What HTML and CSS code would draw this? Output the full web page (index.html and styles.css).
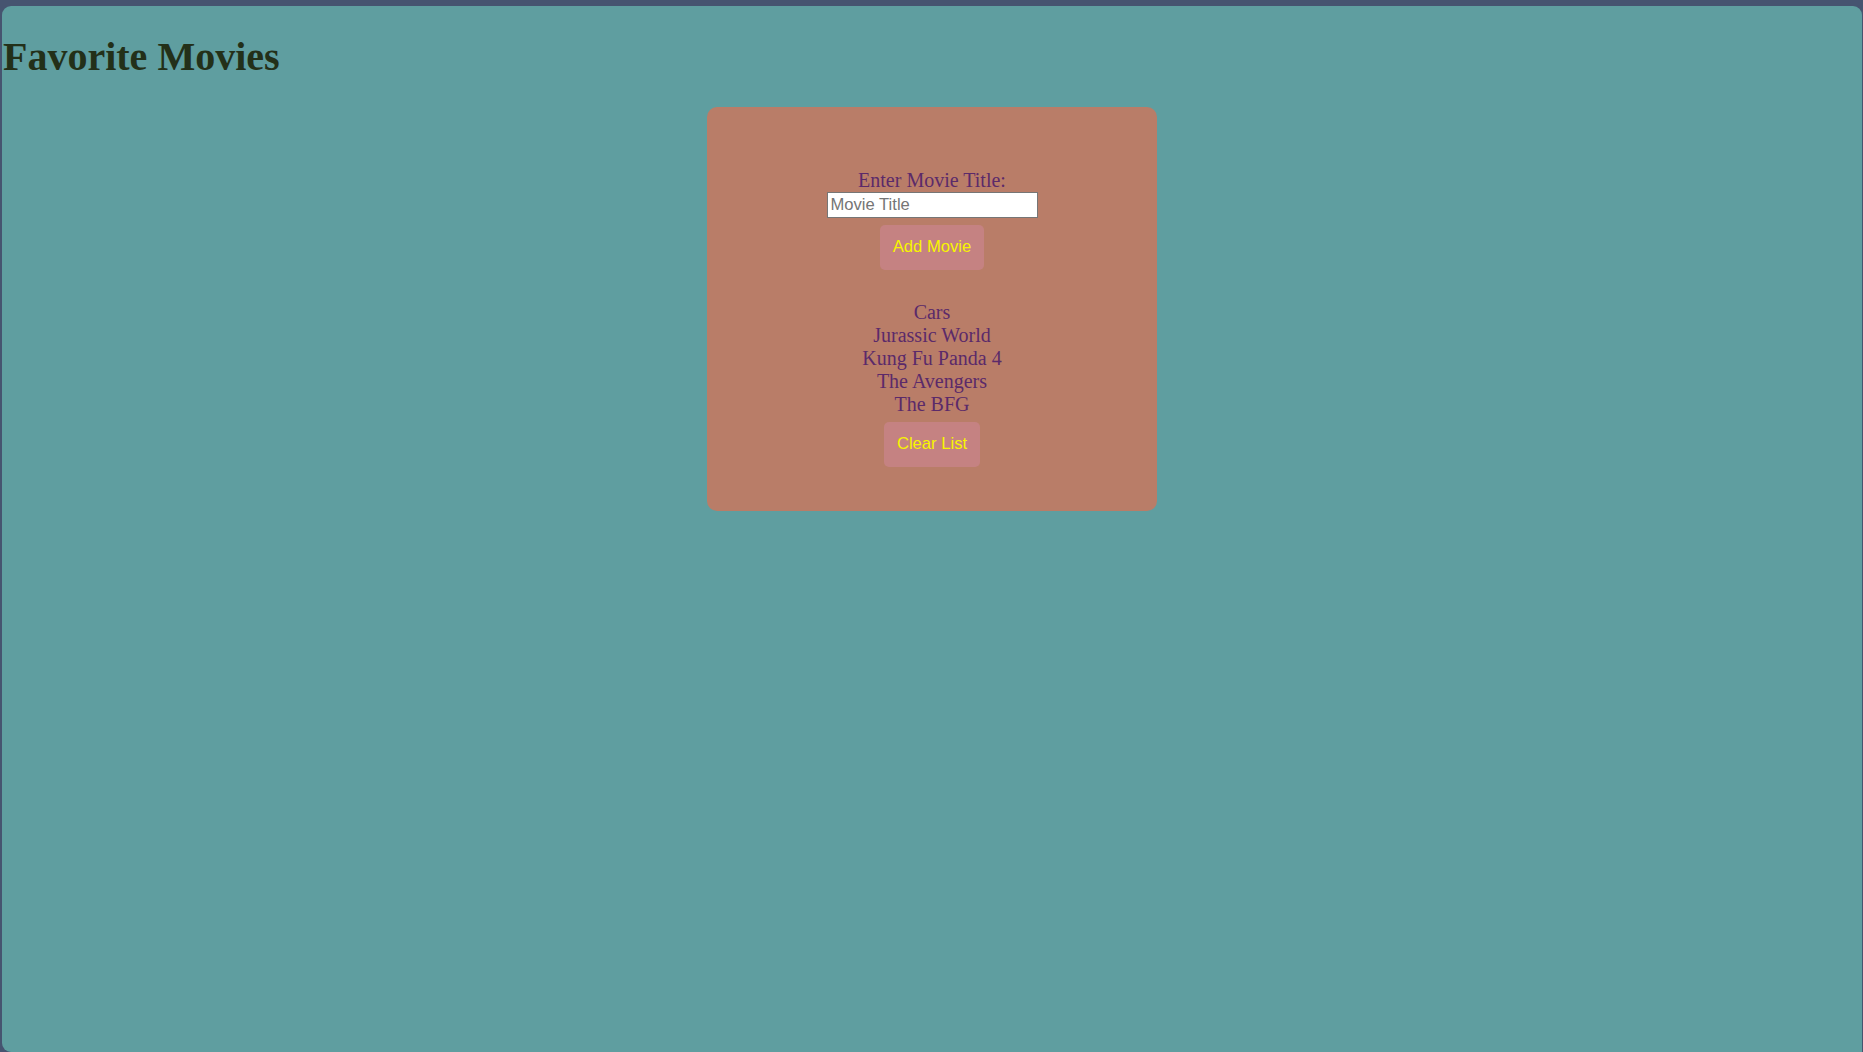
FILE: index.html
```html
<!DOCTYPE html>
<html>
<head>
<meta charset="utf-8">
<title>Favorite Movies</title>
<link rel="stylesheet" href="styles.css">
</head>
<body>
<div class="window">
  <h1 class="title">Favorite Movies</h1>
  <div class="card">
    <label class="label" for="movie">Enter Movie Title:</label>
    <input class="input" id="movie" type="text" placeholder="Movie Title">
    <button class="btn add">Add Movie</button>
    <ul class="list">
      <li>Cars</li>
      <li>Jurassic World</li>
      <li>Kung Fu Panda 4</li>
      <li>The Avengers</li>
      <li>The BFG</li>
    </ul>
    <button class="btn clear">Clear List</button>
  </div>
</div>
</body>
</html>
```
FILE: styles.css
```css
html, body {
  margin: 0;
  padding: 0;
  height: 100%;
}
body {
  background: #465470;
  padding: 6px 1px 0 2px;
  box-sizing: border-box;
  font-family: "Liberation Serif", "Times New Roman", serif;
}
.window {
  background: #5f9ea0;
  height: 100%;
  border-radius: 9px 9px 0 9px;
  display: flow-root;
  box-sizing: border-box;
}
.title {
  margin: 27.8px 0 27px 1px;
  font-size: 40px;
  font-weight: bold;
  line-height: 46px;
  color: #233019;
}
.card {
  width: 450px;
  margin: 0 auto;
  box-sizing: border-box;
  background: #b97d68;
  border-radius: 10px;
  padding: 62px 0 44px;
  display: flex;
  flex-direction: column;
  align-items: center;
  color: #5b2a6a;
  font-size: 20px;
  line-height: 23px;
}
.label {
  display: block;
  height: 23px;
}
.input {
  width: 211px;
  height: 26px;
  box-sizing: border-box;
  border: 1px solid #767676;
  background: #fff;
  padding: 0 3px;
  margin: 0;
  font-family: "Liberation Sans", Arial, sans-serif;
  font-size: 16.6px;
  color: #000;
}
.input::placeholder {
  color: #757575;
}
.btn {
  background: #c58282;
  color: #f7f500;
  border: none;
  border-radius: 5px;
  height: 45px;
  padding: 0 12.5px;
  font-family: "Liberation Sans", Arial, sans-serif;
  font-size: 16.6px;
  cursor: pointer;
}
.add {
  margin-top: 7px;
  width: 104px;
}
.clear {
  margin-top: 6px;
  width: 96px;
}
.list {
  list-style: none;
  margin: 31px 0 0;
  padding: 0;
  text-align: center;
}
.list li {
  height: 23px;
}
```
